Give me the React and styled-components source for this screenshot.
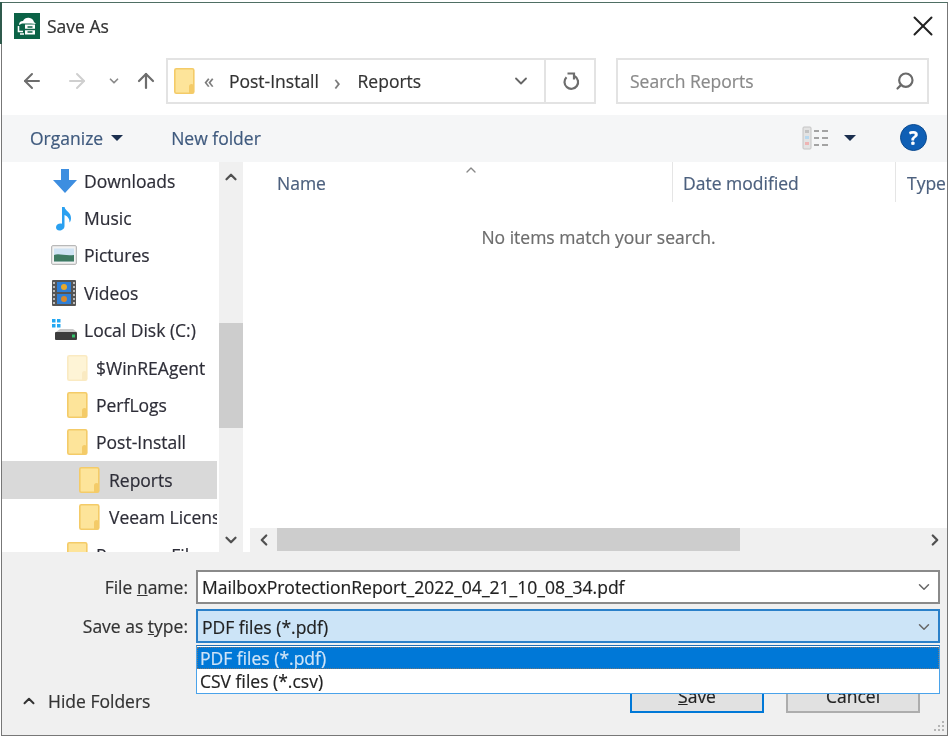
import React from "react";
import styled, { createGlobalStyle } from "styled-components";
import { ArrowLeft, ArrowRight, ArrowUp, ChevronDown, ChevronUp, ChevronLeft, ChevronRight, X, Search } from "lucide-react";

const Global = createGlobalStyle`
  html, body { margin: 0; padding: 0; background: #fff; }
  body { font-family: "Open Sans", "Noto Sans", "Liberation Sans", sans-serif; color: #2a2a2a; }
  * { box-sizing: border-box; }
`;

const Dialog = styled.div`
  position: relative;
  width: 947px;
  height: 734px;
  margin: 2px 0 0 1px;
  background: #fff;
  border: 1px solid #777;
  border-top-color: #4f6f64;
  display: flex;
  flex-direction: column;
  font-size: 17.5px;
  -webkit-text-stroke: 0.2px;
  filter: blur(0.35px);
  &::before {
    content: "";
    position: absolute;
    left: -2px;
    top: -1px;
    width: 2px;
    height: 42px;
    background: #2f5a4c;
  }
`;

const TitleBar = styled.div`
  height: 47px;
  display: flex;
  align-items: center;
  padding: 0 14px 2px 12px;
`;
const TitleText = styled.span`
  margin-left: 7px;
  flex: 1;
  color: #333;
`;
const CloseBtn = styled.button`
  width: 20px;
  height: 20px;
  padding: 0;
  border: 0;
  background: none;
  color: #222;
  display: flex;
  align-items: center;
  justify-content: center;
`;

const NavBar = styled.div`
  height: 65px;
  display: flex;
  align-items: center;
  padding: 0 0 3px 8px;
`;
const NavBtn = styled.button`
  width: ${(p) => p.$w}px;
  height: 30px;
  padding: 0;
  border: 0;
  background: none;
  color: ${(p) => p.$color || "#6d6d6d"};
  display: flex;
  align-items: center;
  justify-content: center;
`;
const AddressBox = styled.div`
  margin-left: 2px;
  width: 430px;
  height: 46px;
  border: 2px solid #e3e3e3;
  display: flex;
  align-items: center;
  padding-left: 6px;
`;
const Crumbs = styled.div`
  flex: 1;
  display: flex;
  align-items: center;
  color: #333;
`;
const CrumbSep = styled.span`
  color: #777;
  font-size: ${(p) => p.$size}px;
  line-height: 1;
  margin: 0 ${(p) => p.$right}px 0 ${(p) => p.$left}px;
`;
const AddressDrop = styled.div`
  width: 33px;
  height: 100%;
  display: flex;
  align-items: center;
  color: #666;
`;
const Refresh = styled.div`
  width: 50px;
  height: 100%;
  border-left: 2px solid #e3e3e3;
  padding-left: 3px;
  display: flex;
  align-items: center;
  justify-content: center;
  color: #6d6d6d;
`;
const SearchBox = styled.div`
  margin-left: 20px;
  width: 313px;
  height: 46px;
  border: 2px solid #e3e3e3;
  display: flex;
  align-items: center;
  justify-content: space-between;
  padding: 0 12px;
  color: #8a8a8a;
`;
const MirrorIcon = styled.span`
  display: flex;
  transform: scaleX(-1);
  color: #6a6a6a;
`;

const CommandBar = styled.div`
  height: 47px;
  background: #f5f6f7;
  display: flex;
  align-items: center;
  padding: 0 20px 2px 28px;
  color: #3f5a7e;
`;
const CommandItem = styled.span`
  display: flex;
  align-items: center;
  margin-right: ${(p) => p.$mr || 0}px;
`;
const Caret = styled.span`
  width: 0;
  height: 0;
  margin-left: ${(p) => p.$ml || 8}px;
  border-left: 6px solid transparent;
  border-right: 6px solid transparent;
  border-top: 6px solid #1b2f4f;
`;
const Spacer = styled.div`
  flex: 1;
`;
const HelpIcon = styled.span`
  width: 27px;
  height: 27px;
  margin-left: 44px;
  border-radius: 50%;
  background: #0f5fb5;
  border: 1px solid #0a4a90;
  color: #fff;
  font-weight: 700;
  font-size: 19px;
  display: flex;
  align-items: center;
  justify-content: center;
`;

const Main = styled.div`
  height: 390px;
  display: flex;
`;
const Tree = styled.div`
  width: 217px;
  overflow: hidden;
  flex: none;
`;
const TreeRow = styled.div`
  height: 37.4px;
  width: 215px;
  display: flex;
  align-items: center;
  padding-left: ${(p) => p.$indent}px;
  background: ${(p) => (p.$selected ? "#d9d9d9" : "transparent")};
  white-space: nowrap;
  overflow: hidden;
  color: #2e2e38;
`;
const TreeIcon = styled.span`
  width: ${(p) => p.$w}px;
  flex: none;
  display: flex;
  align-items: center;
`;
const VScroll = styled.div`
  width: 24px;
  flex: none;
  background: #f0f0f0;
  display: flex;
  flex-direction: column;
`;
const ScrollBtn = styled.div`
  height: ${(p) => p.$h}px;
  flex: none;
  display: flex;
  align-items: center;
  justify-content: center;
  color: #505050;
`;
const VTrack = styled.div`
  flex: 1;
  padding-top: 131px;
`;
const VThumb = styled.div`
  height: 105px;
  background: #cdcdcd;
`;
const ListPane = styled.div`
  flex: 1;
  min-width: 0;
  margin-left: 7px;
  display: flex;
  flex-direction: column;
`;
const ListHeader = styled.div`
  height: 40px;
  display: flex;
  color: #4c607e;
`;
const HeadCol = styled.div`
  position: relative;
  width: ${(p) => p.$w}px;
  flex: ${(p) => (p.$w ? "none" : 1)};
  padding: 9px 0 0 ${(p) => p.$pad}px;
  border-left: ${(p) => (p.$line ? "1px solid #e5e5e5" : "0")};
  overflow: hidden;
`;
const SortMark = styled.span`
  position: absolute;
  left: 213px;
  top: 0;
  color: #888;
  display: flex;
`;
const ListBody = styled.div`
  flex: 1;
  padding-top: 23px;
  text-align: center;
  color: #6d6d6d;
`;
const HScroll = styled.div`
  height: 24px;
  flex: none;
  background: #f0f0f0;
  display: flex;
  align-items: stretch;
`;
const HBtn = styled.div`
  width: ${(p) => p.$w}px;
  display: flex;
  align-items: center;
  justify-content: center;
  color: #505050;
`;
const HThumb = styled.div`
  width: 463px;
  height: 23px;
  background: #cdcdcd;
`;

const Bottom = styled.div`
  position: relative;
  flex: 1;
  background: #f0f0f0;
  padding-top: 18px;
`;
const FormRow = styled.div`
  display: flex;
  align-items: center;
  margin-bottom: 5px;
`;
const Label = styled.label`
  width: 186px;
  text-align: right;
  color: #333;
  flex: none;
`;
const Combo = styled.div`
  position: relative;
  margin-left: 8px;
  width: 744px;
  height: 34px;
  display: flex;
  align-items: center;
  padding: ${(p) => (p.$focus ? "2px" : "0")} 5px 0 4px;
  justify-content: space-between;
  border: 2px solid ${(p) => (p.$focus ? "#2a80c9" : "#8a8a8a")};
  background: ${(p) => (p.$focus ? "#cce4f7" : "#fff")};
  color: #222;
`;
const ComboArrow = styled.span`
  display: flex;
  color: #666;
`;
const DropList = styled.div`
  position: absolute;
  z-index: 2;
  left: -2px;
  top: 34px;
  width: 744px;
  height: 49px;
  padding-top: 1px;
  background: #fff;
  border: 1px solid #4aa3ea;
  border-top-color: #1f6fb5;
`;
const DropItem = styled.div`
  height: ${(p) => p.$h}px;
  padding-left: 3px;
  display: flex;
  align-items: center;
  background: ${(p) => (p.$active ? "#0078d7" : "#fff")};
  color: ${(p) => (p.$active ? "#cfe4f7" : "#222")};
  outline: ${(p) => (p.$active ? "1px dotted #777" : "0")};
  outline-offset: -1px;
`;
const Footer = styled.div`
  display: flex;
  align-items: center;
  height: 35px;
  margin-top: 35px;
  padding: 0 27px 0 18px;
`;
const HideFolders = styled.div`
  display: flex;
  align-items: center;
  margin-top: 10px;
  color: #333;
  gap: 10px;
`;
const DialogBtn = styled.button`
  width: 134px;
  height: 35px;
  margin-left: ${(p) => p.$ml || 0}px;
  padding: 0;
  font: inherit;
  color: #222;
  background: #e1e1e1;
  border: 2px solid ${(p) => (p.$primary ? "#0078d7" : "#adadad")};
`;
const Grip = styled.svg`
  position: absolute;
  right: 2px;
  bottom: 1px;
`;

const Folder = ({ faded }) => (
  <svg width="21" height="26" viewBox="0 0 21 26" opacity={faded ? 0.4 : 1}>
    <rect x="0.8" y="0.8" width="19" height="24.4" rx="1.5" fill="#fde49a" stroke="#f4cb68" strokeWidth="1.6" />
    <path d="M15 25V18.5a2.5 2.5 0 0 1 5 0V25Z" fill="#f4cb68" />
  </svg>
);

const AppLogo = () => (
  <svg width="26" height="26" viewBox="0 0 26 26">
    <rect width="26" height="26" fill="#0b6246" />
    <path d="M5 12a4 4 0 0 1 4-4 6 6 0 0 1 11 1l2 2-5-.5H8Z" fill="#fff" />
    <path d="M4.5 13v5.5H9M6 21h4" fill="none" stroke="#fff" strokeWidth="1.6" />
    <rect x="11" y="11.5" width="10" height="10" fill="#fff" />
    <path d="M11 16.5h10M13.5 14h5M13.5 19h5" stroke="#0b6246" strokeWidth="1.5" />
  </svg>
);

const RefreshIcon = () => (
  <svg width="20" height="20" viewBox="0 0 20 20" fill="none" stroke="currentColor" strokeWidth="2.2">
    <path d="M12.8 5.2A6.8 6.8 0 1 1 4.5 6.2" />
    <path d="M5.500 2.500h6.500v6" />
  </svg>
);

const ViewIcon = () => (
  <svg width="27" height="24" viewBox="0 0 27 24">
    <rect x="1" y="1" width="8" height="22" rx="1" fill="#e3e3e3" stroke="#c4c4c4" />
    <rect x="3" y="4" width="4" height="3" fill="#c2c2c2" />
    <rect x="3" y="10" width="4" height="3" fill="#b7d8ef" />
    <rect x="3" y="16" width="4" height="3" fill="#eeb4b4" />
    <path d="M12 5h5M20 5h6M12 12h5M20 12h6M12 19h5M20 19h6" stroke="#a3a3a3" strokeWidth="2" />
  </svg>
);

const DownloadIcon = () => (
  <svg width="26" height="26" viewBox="0 0 26 26">
    <path d="M9 1h8v11h8L13 25 1 12h8Z" fill="#3d8ee0" />
  </svg>
);
const MusicIcon = () => (
  <svg width="26" height="26" viewBox="0 0 26 26">
    <path d="M10 2h2.600c.5 4 6.400 5 6.400 11 0 2-.6 3.500-1.500 4.500.3-4-2.200-6.500-5-7.500v11c0 2.800-2.600 4.500-5 4.500S4 24.200 4 22.300c0-2.500 3-4.300 6-3.500Z" fill="#2aa0f0" />
  </svg>
);
const PictureIcon = () => (
  <svg width="26" height="20" viewBox="0 0 26 20">
    <rect x="0.7" y="0.7" width="24.6" height="18.6" rx="1" fill="#f3f3f3" stroke="#a9a9a9" />
    <rect x="3" y="3.5" width="20" height="13" fill="#cfe3f4" />
    <path d="M3 10c5-2 10 1 20 0v6.500H3Z" fill="#3e7a62" />
  </svg>
);
const VideoIcon = () => (
  <svg width="24" height="26" viewBox="0 0 24 26">
    <rect width="24" height="26" rx="1" fill="#555" />
    <path d="M2 2v22M22 2v22" stroke="#bbb" strokeWidth="2" strokeDasharray="2 2" />
    <rect x="5" y="2" width="14" height="10" fill="#2f7fd6" />
    <rect x="5" y="14" width="14" height="10" fill="#2f7fd6" />
    <circle cx="12" cy="7" r="3" fill="#e8a92b" />
    <circle cx="12" cy="19" r="3" fill="#d9892b" />
  </svg>
);
const DiskIcon = () => (
  <svg width="26" height="24" viewBox="0 0 26 24">
    <path d="M0 1h3.500v3.500H0ZM5 1h3.500v3.500H5ZM0 6h3.500v3.500H0ZM5 6h3.500v3.500H5Z" fill="#24a8f2" />
    <path d="M4 14 8 11h13l4 3Z" fill="#c9c9c9" />
    <rect x="3" y="14" width="22" height="8" rx="1" fill="#3d3d3d" />
    <rect x="20" y="16.5" width="3" height="3" fill="#33c26a" />
  </svg>
);

const treeRows = [
  { label: "Downloads", indent: 50, w: 32, icon: <DownloadIcon /> },
  { label: "Music", indent: 50, w: 32, icon: <MusicIcon /> },
  { label: "Pictures", indent: 49, w: 33, icon: <PictureIcon /> },
  { label: "Videos", indent: 50, w: 32, icon: <VideoIcon /> },
  { label: "Local Disk (C:)", indent: 50, w: 32, icon: <DiskIcon /> },
  { label: "$WinREAgent", indent: 65, w: 29, icon: <Folder faded /> },
  { label: "PerfLogs", indent: 65, w: 29, icon: <Folder /> },
  { label: "Post-Install", indent: 65, w: 29, icon: <Folder /> },
  { label: "Reports", indent: 77, w: 30, icon: <Folder />, selected: true },
  { label: "Veeam Licenses", indent: 77, w: 30, icon: <Folder /> },
  { label: "Program Files", indent: 65, w: 29, icon: <Folder /> },
];

export default function App() {
  return (
    <>
      <Global />
      <Dialog>
        <TitleBar>
          <AppLogo />
          <TitleText>Save As</TitleText>
          <CloseBtn aria-label="Close"><X size={34} strokeWidth={1.4} style={{ flex: "none" }} /></CloseBtn>
        </TitleBar>

        <NavBar>
          <NavBtn $w={44}><ArrowLeft size={24} strokeWidth={2} /></NavBtn>
          <NavBtn $w={46} $color="#cfcfcf"><ArrowRight size={24} strokeWidth={2} /></NavBtn>
          <NavBtn $w={28} $color="#8a8a8a"><ChevronDown size={14} strokeWidth={3} /></NavBtn>
          <NavBtn $w={36}><ArrowUp size={24} strokeWidth={2.2} /></NavBtn>
          <AddressBox>
            <Folder />
            <Crumbs>
              <CrumbSep $left={9} $right={15} $size={20}>«</CrumbSep>
              <span>Post-Install</span>
              <CrumbSep $left={15} $right={17} $size={22}>›</CrumbSep>
              <span>Reports</span>
            </Crumbs>
            <AddressDrop><ChevronDown size={20} strokeWidth={2.2} /></AddressDrop>
            <Refresh><RefreshIcon /></Refresh>
          </AddressBox>
          <SearchBox>
            <span>Search Reports</span>
            <MirrorIcon><Search size={20} strokeWidth={2.6} /></MirrorIcon>
          </SearchBox>
        </NavBar>

        <CommandBar>
          <CommandItem $mr={48}>Organize<Caret /></CommandItem>
          <CommandItem>New folder</CommandItem>
          <Spacer />
          <ViewIcon />
          <Caret $ml={15} />
          <HelpIcon>?</HelpIcon>
        </CommandBar>

        <Main>
          <Tree>
            {treeRows.map((r) => (
              <TreeRow key={r.label} $indent={r.indent} $selected={r.selected}>
                <TreeIcon $w={r.w}>{r.icon}</TreeIcon>
                {r.label}
              </TreeRow>
            ))}
          </Tree>
          <VScroll>
            <ScrollBtn $h={30}><ChevronUp size={18} strokeWidth={3} /></ScrollBtn>
            <VTrack><VThumb /></VTrack>
            <ScrollBtn $h={24}><ChevronDown size={18} strokeWidth={3} /></ScrollBtn>
          </VScroll>
          <ListPane>
            <ListHeader>
              <HeadCol $w={422} $pad={27}>
                Name
                <SortMark><ChevronUp size={16} strokeWidth={2} /></SortMark>
              </HeadCol>
              <HeadCol $w={223} $pad={10} $line>Date modified</HeadCol>
              <HeadCol $pad={11} $line>Type</HeadCol>
            </ListHeader>
            <ListBody>No items match your search.</ListBody>
            <HScroll>
              <HBtn $w={27}><ChevronLeft size={18} strokeWidth={3} /></HBtn>
              <HThumb />
              <Spacer />
              <HBtn $w={24}><ChevronRight size={18} strokeWidth={3} /></HBtn>
            </HScroll>
          </ListPane>
        </Main>

        <Bottom>
          <FormRow>
            <Label>File <u>n</u>ame:</Label>
            <Combo>
              <span>MailboxProtectionReport_2022_04_21_10_08_34.pdf</span>
              <ComboArrow><ChevronDown size={18} strokeWidth={2} /></ComboArrow>
            </Combo>
          </FormRow>
          <FormRow>
            <Label>Save as <u>t</u>ype:</Label>
            <Combo $focus>
              <span>PDF files (*.pdf)</span>
              <ComboArrow><ChevronDown size={18} strokeWidth={2} /></ComboArrow>
              <DropList>
                <DropItem $h={22} $active>PDF files (*.pdf)</DropItem>
                <DropItem $h={24}>CSV files (*.csv)</DropItem>
              </DropList>
            </Combo>
          </FormRow>
          <Footer>
            <HideFolders><ChevronUp size={18} strokeWidth={2.6} />Hide Folders</HideFolders>
            <Spacer />
            <DialogBtn $primary><u>S</u>ave</DialogBtn>
            <DialogBtn $ml={22}>Cancel</DialogBtn>
          </Footer>
          <Grip width="14" height="14" viewBox="0 0 14 14">
            <path d="M11 1h2v2h-2ZM7 5h2v2H7ZM11 5h2v2h-2ZM3 9h2v2H3ZM7 9h2v2H7ZM11 9h2v2h-2Z" fill="#b5b5b5" />
          </Grip>
        </Bottom>
      </Dialog>
    </>
  );
}
